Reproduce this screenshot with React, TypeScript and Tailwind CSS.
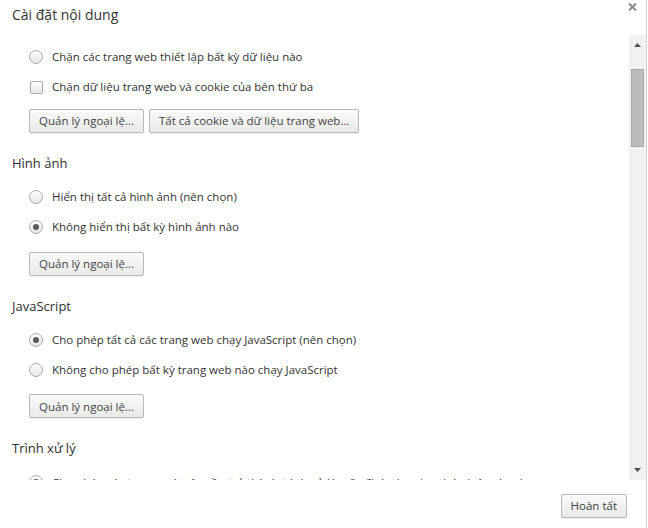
import type { ReactNode } from "react";

const font = { fontFamily: '"Open Sans", "Noto Sans", sans-serif' };

function Radio({ checked, children }: { checked?: boolean; children: ReactNode }) {
  return (
    <div className="flex h-[30px] items-center pl-[29px]">
      <span className="flex h-[14px] w-[14px] shrink-0 items-center justify-center rounded-full border border-[#a9a9a9] bg-gradient-to-b from-[#fdfdfd] to-[#e6e6e6] shadow-[inset_0_1px_1px_rgba(255,255,255,0.8)]">
        {checked && <span className="h-[6px] w-[6px] rounded-full bg-[#5a5a5a]" />}
      </span>
      <span className="ml-[9px] whitespace-nowrap text-[11.5px] text-[#333]">{children}</span>
    </div>
  );
}

function Checkbox({ children }: { children: ReactNode }) {
  return (
    <div className="flex h-[30px] items-center pl-[30px]">
      <span className="h-[13px] w-[13px] shrink-0 rounded-[2px] border border-[#a9a9a9] bg-gradient-to-b from-[#fdfdfd] to-[#e6e6e6]" />
      <span className="ml-[9px] whitespace-nowrap text-[11.5px] text-[#333]">{children}</span>
    </div>
  );
}

function Btn({ children }: { children: ReactNode }) {
  return (
    <button className="h-[24px] whitespace-nowrap rounded-[2px] border border-[#b8b8b8] bg-gradient-to-b from-[#fafafa] to-[#e9e9e9] px-[9px] text-[11.5px] text-[#444] shadow-[0_1px_0_rgba(0,0,0,0.06)]">
      {children}
    </button>
  );
}

function Section({ title, children }: { title: string; children: ReactNode }) {
  return (
    <div className="pb-[21px]">
      <div className="h-[20px] pl-[12px] text-[13px] leading-[19px] text-[#303030]">{title}</div>
      <div className="mt-[8px]">{children}</div>
    </div>
  );
}

export default function App() {
  return (
    <div className="h-[528px] w-[648px] bg-white" style={font}>
      <div className="flex h-full w-[647px] flex-col border-r border-[#d0d0d0]">
        <div className="relative h-[35px] shrink-0">
          <div className="pl-[12px] pt-[5px] text-[14px] leading-[20px] text-[#333]">Cài đặt nội dung</div>
          <svg className="absolute left-[628px] top-[3px]" width="9" height="8" viewBox="0 0 9 8">
            <path d="M1 0.5 L8 7.5 M8 0.5 L1 7.5" stroke="#8a8a8a" strokeWidth="2" />
          </svg>
        </div>

        <div className="flex h-[445px] shrink-0">
          <div className="flex-1 overflow-hidden">
            <div className="pt-[7px] pb-[21px]">
              <Radio>Chặn các trang web thiết lập bất kỳ dữ liệu nào</Radio>
              <Checkbox>Chặn dữ liệu trang web và cookie của bên thứ ba</Checkbox>
              <div className="mt-[7px] flex gap-[5px] pl-[29px]">
                <Btn>Quản lý ngoại lệ...</Btn>
                <Btn>Tất cả cookie và dữ liệu trang web...</Btn>
              </div>
            </div>

            <Section title="Hình ảnh">
              <Radio>Hiển thị tất cả hình ảnh (nên chọn)</Radio>
              <Radio checked>Không hiển thị bất kỳ hình ảnh nào</Radio>
              <div className="mt-[8px] pl-[29px]">
                <Btn>Quản lý ngoại lệ...</Btn>
              </div>
            </Section>

            <Section title="JavaScript">
              <Radio checked>Cho phép tất cả các trang web chạy JavaScript (nên chọn)</Radio>
              <Radio>Không cho phép bất kỳ trang web nào chạy JavaScript</Radio>
              <div className="mt-[8px] pl-[29px]">
                <Btn>Quản lý ngoại lệ...</Btn>
              </div>
            </Section>

            <Section title="Trình xử lý">
              <Radio checked>Cho phép các trang web yêu cầu trở thành trình xử lý mặc định cho giao thức (nên chọn)</Radio>
            </Section>
          </div>

          <div className="relative w-[17px] shrink-0 bg-[#f1f1f1]">
            <svg className="absolute left-[5px] top-[8px]" width="7" height="4" viewBox="0 0 7 4">
              <path d="M3.5 0 L7 4 L0 4 Z" fill="#505050" />
            </svg>
            <div className="absolute left-[2px] top-[34px] h-[78px] w-[13px] border border-[#a8a8a8] bg-[#bcbcbc]" />
            <svg className="absolute bottom-[8px] left-[5px]" width="7" height="4" viewBox="0 0 7 4">
              <path d="M0 0 L7 0 L3.5 4 Z" fill="#505050" />
            </svg>
          </div>
        </div>

        <div className="flex justify-end pr-[19px] pt-[14px]">
          <Btn>Hoàn tất</Btn>
        </div>
      </div>
    </div>
  );
}
